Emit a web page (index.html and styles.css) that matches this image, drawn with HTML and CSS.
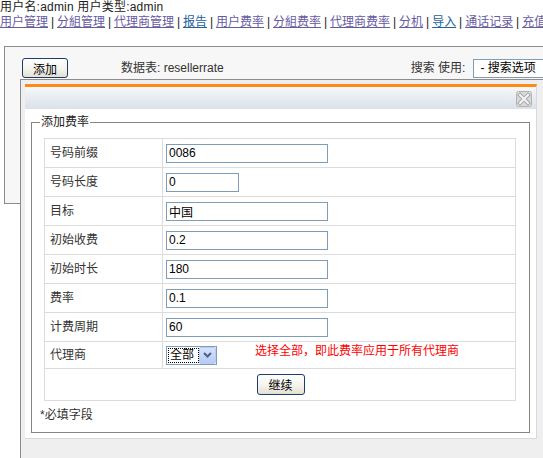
FILE: index.html
```html
<!DOCTYPE html>
<html lang="zh-CN">
<head>
  <meta charset="UTF-8">
  <meta name="viewport" content="width=device-width, initial-scale=1.0">
  <title>添加费率</title>
  <link rel="stylesheet" href="styles.css">
</head>
<body>
  <div class="userinfo">用户名:admin 用户类型:admin</div>
  <div class="nav">
    <a href="#">用户管理</a> | <a href="#">分組管理</a> | <a href="#">代理商管理</a> | <a href="#" class="seen">报告</a> | <a href="#">用户费率</a> | <a href="#">分組费率</a> | <a href="#">代理商费率</a> | <a href="#">分机</a> | <a href="#" class="seen">导入</a> | <a href="#">通话记录</a> | <a href="#">充值</a>
  </div>

  <!-- Data table panel -->
  <div class="panel">
    <div class="toolbar">
      <button class="btn">添加</button>
      <span class="table-name">数据表: resellerrate</span>
      <span class="search-label">搜索 使用:</span>
      <span class="search-select">- 搜索选项</span>
    </div>
  </div>

  <!-- Add rate dialog -->
  <div class="dialog">
    <div class="dialog-box">
      <div class="dialog-head">
        <svg class="close" width="16" height="16" viewBox="0 0 16 16">
          <rect x="0.5" y="0.5" width="15" height="15" rx="2" fill="#d9d9d9" stroke="#b4b4b4"/>
          <path d="M4 4 L12 12 M12 4 L4 12" stroke="#a8a8a8" stroke-width="4" stroke-linecap="square"/>
          <path d="M4 4 L12 12 M12 4 L4 12" stroke="#f4f4f4" stroke-width="2" stroke-linecap="square"/>
        </svg>
      </div>
      <div class="dialog-body">
        <fieldset>
          <legend>添加费率</legend>
          <table class="form">
            <tr>
              <td class="label">号码前缀</td>
              <td class="value"><input class="field" value="0086"></td>
            </tr>
            <tr>
              <td class="label">号码长度</td>
              <td class="value"><input class="field short" value="0"></td>
            </tr>
            <tr>
              <td class="label">目标</td>
              <td class="value"><input class="field" value="中国"></td>
            </tr>
            <tr>
              <td class="label">初始收费</td>
              <td class="value"><input class="field" value="0.2"></td>
            </tr>
            <tr>
              <td class="label">初始时长</td>
              <td class="value"><input class="field" value="180"></td>
            </tr>
            <tr>
              <td class="label">费率</td>
              <td class="value"><input class="field" value="0.1"></td>
            </tr>
            <tr>
              <td class="label">计费周期</td>
              <td class="value"><input class="field" value="60"></td>
            </tr>
            <tr class="agent-row">
              <td class="label">代理商</td>
              <td class="value">
                <div class="agent">
                  <span class="combo">
                    <span class="combo-text">全部</span>
                    <span class="combo-btn">
                      <svg width="9" height="6" viewBox="0 0 9 6"><path d="M1 1 L4.5 4.5 L8 1" fill="none" stroke="#4d6185" stroke-width="2"/></svg>
                    </span>
                  </span>
                  <span class="hint">选择全部，即此费率应用于所有代理商</span>
                </div>
              </td>
            </tr>
            <tr class="submit-row">
              <td colspan="2"><button class="btn continue">继续</button></td>
            </tr>
          </table>
          <p class="note">*必填字段</p>
        </fieldset>
      </div>
    </div>
  </div>
</body>
</html>
```

FILE: styles.css
```css
html, body {
  overflow: hidden;
}
body {
  margin: 0;
  height: 458px;
  position: relative;
  font-family: "Liberation Sans", "Noto Sans CJK SC", sans-serif;
  font-size: 12px;
  line-height: 15px;
  color: #222;
  background: #fff;
  white-space: nowrap;
}
.userinfo {
  line-height: 15px;
  letter-spacing: 0.2px;
}
.nav {
  line-height: 14px;
  color: #222;
  word-spacing: -0.4px;
}
.nav a {
  color: #675b9f;
}
.nav a.seen {
  color: #22619d;
}

/* panel behind the dialog */
.panel {
  margin: 17px 0 0 4px;
  height: 156px;
  background: #f7f7f7;
  border: 1px solid #8c8c8c;
  border-right: none;
}
.toolbar {
  display: flex;
  align-items: center;
  padding: 11px 0 0 17px;
}
.toolbar > * {
  flex-shrink: 0;
}
.btn {
  width: 46px;
  height: 20px;
  padding: 0;
  border: 1px solid #1c3d6e;
  border-radius: 3px;
  background: linear-gradient(#ffffff, #f3f2ea 60%, #e3e0d2);
  font-family: "Liberation Sans", "Noto Sans CJK SC", sans-serif;
  font-size: 12px;
  color: #000;
}
.table-name {
  margin-left: 53px;
  color: #333;
}
.search-label {
  margin-left: 187px;
  color: #333;
}
.search-select {
  margin-left: 8px;
  width: 90px;
  height: 17px;
  line-height: 17px;
  padding-left: 6px;
  border: 1px solid #7f9db9;
  background: #fff;
  color: #000;
}

/* dialog */
.dialog {
  position: absolute;
  left: 20px;
  top: 79px;
  right: 0;
  bottom: 0;
  padding: 4px 0 0 4px;
  background: #efefef;
  border-left: 1px solid #8c8c8c;
  border-top: 1px solid #8c8c8c;
}
.dialog-box {
  width: 511px;
  border-top: 3px solid #ff8a16;
  border-right: 1px solid #d9d9d9;
}
.dialog-head {
  height: 22px;
  box-sizing: border-box;
  padding: 4px 4px 0 0;
  display: flex;
  justify-content: flex-end;
  align-items: flex-start;
  background: linear-gradient(#f6f8fa, #d9e1ea);
}
.dialog-body {
  background: #fff;
  padding: 6px 6px 5px 6px;
  border-bottom: 1px solid #d9d9d9;
}
fieldset {
  margin: 0;
  padding: 0 12px 0 8px;
  border: 1px solid #86867c;
}
legend {
  padding: 0 1px;
  line-height: 14px;
  color: #222;
}
.form {
  margin: 9px 0 0 4px;
  width: 472px;
  border-collapse: collapse;
  border: 1px solid #dcdcdc;
}
.form td {
  border: 1px solid #dcdcdc;
  padding: 0;
  height: 28px;
  vertical-align: middle;
}
.form td.label {
  width: 112px;
  padding-left: 5px;
  color: #333;
}
.form td.value {
  padding-left: 3px;
}
.field {
  display: block;
  width: 162px;
  height: 19px;
  box-sizing: border-box;
  padding: 0 2px;
  border: 1px solid #7f9db9;
  font-family: "Liberation Sans", "Noto Sans CJK SC", sans-serif;
  font-size: 12px;
  color: #000;
}
.field.short {
  width: 73px;
}
.agent-row td {
  height: 26px;
}
.agent {
  display: flex;
  align-items: center;
}
.combo {
  display: flex;
  width: 51px;
  height: 19px;
  box-sizing: border-box;
  border: 1px solid #7f9db9;
  background: #fff;
}
.combo-text {
  flex: 1;
  margin: 2px 1px 2px 2px;
  outline: 1px dotted #000;
  line-height: 13px;
  color: #000;
  padding-left: 1px;
}
.combo-btn {
  width: 15px;
  display: flex;
  align-items: center;
  justify-content: center;
  border: 1px solid #b9cbf3;
  border-radius: 2px;
  background: linear-gradient(#d6e2fd, #b6cbf8);
}
.hint {
  margin-left: 38px;
  color: #ff0000;
  align-self: flex-start;
  margin-top: -2px;
}
.submit-row td {
  height: 31px;
  text-align: center;
}
.btn.continue {
  width: 48px;
  height: 21px;
  margin-left: 1px;
}
.note {
  margin: 6px 0 9px;
  line-height: 16px;
  color: #333;
}
```
